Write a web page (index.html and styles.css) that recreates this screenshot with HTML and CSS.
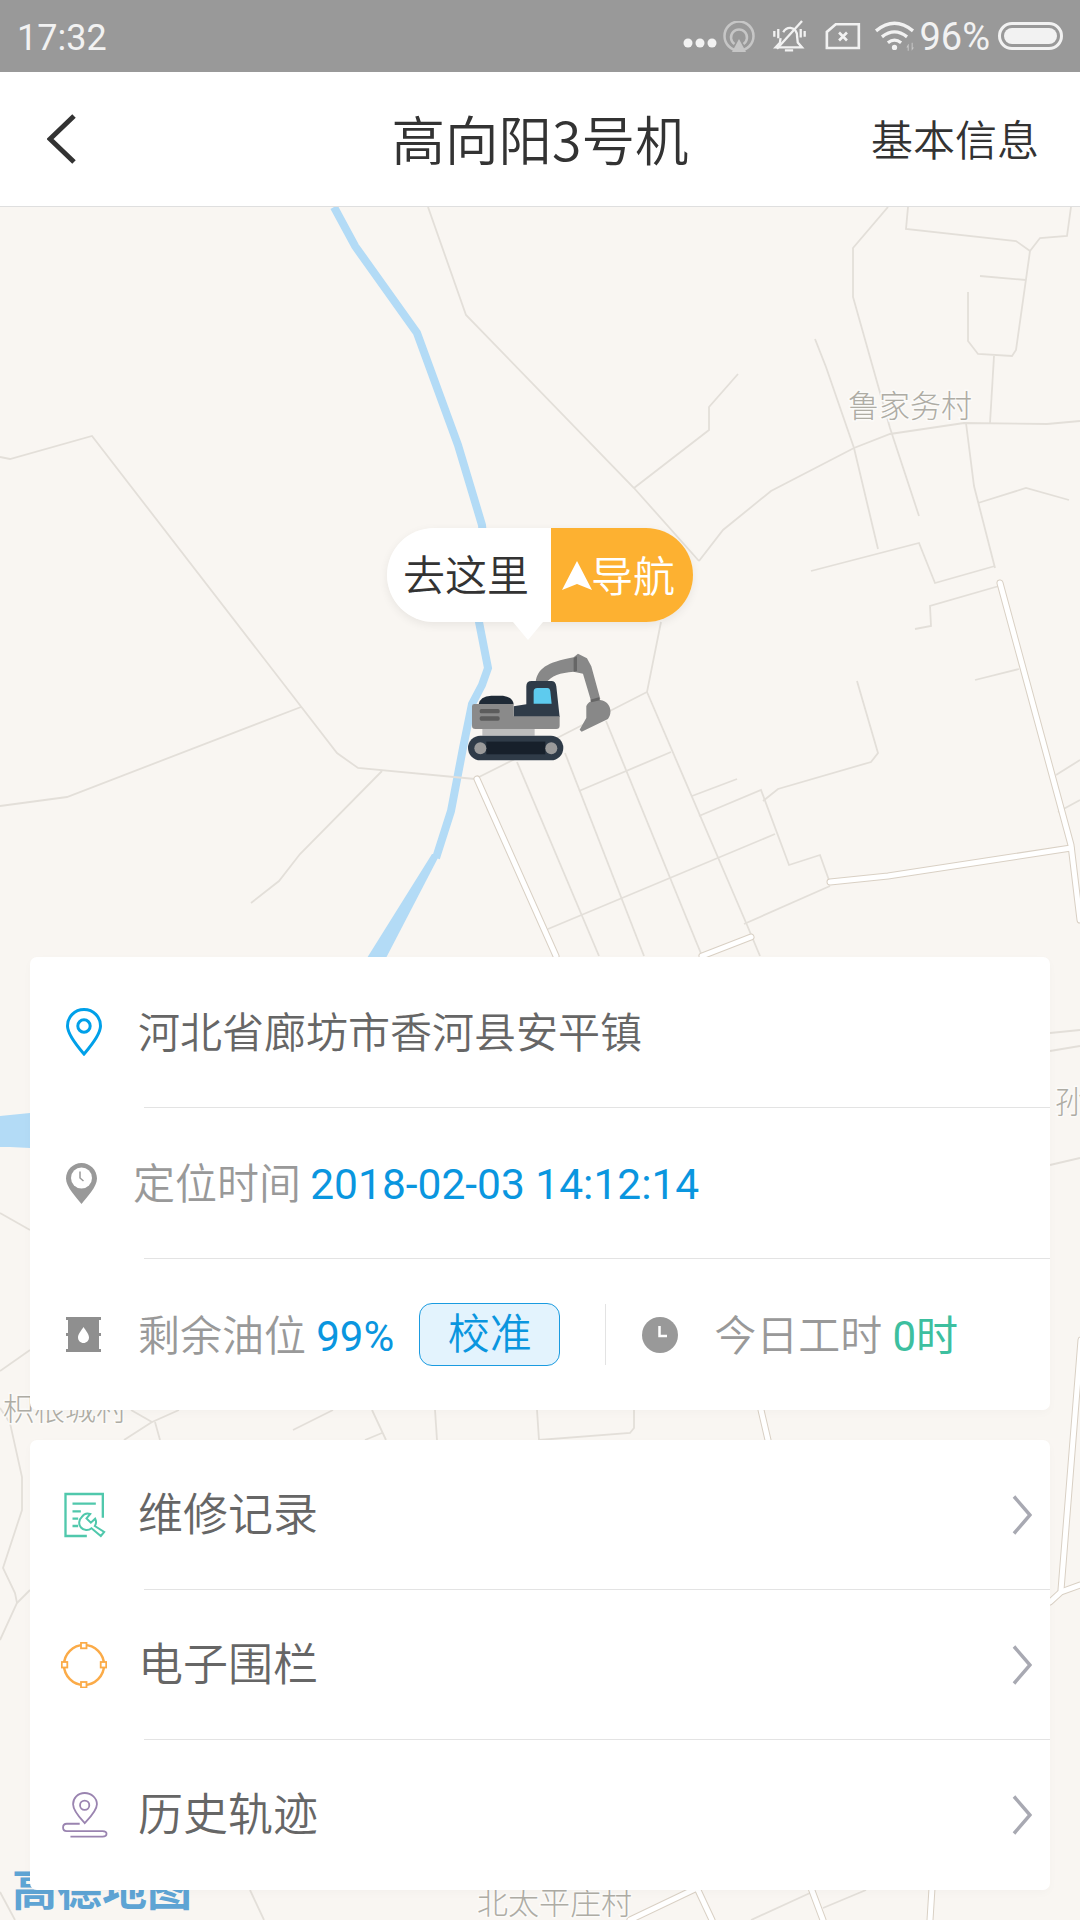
FILE: index.html
```html
<!DOCTYPE html>
<html lang="zh-CN">
<head>
<meta charset="utf-8">
<title>高向阳3号机</title>
<link rel="stylesheet" href="styles.css">
</head>
<body>
<div class="screen">
  <header class="statusbar">
    <span class="clock-text">17:32</span>
    <div class="status-icons">
      <svg class="s-dots" viewBox="0 0 36 10"><circle cx="5" cy="5" r="4.5"/><circle cx="17" cy="5" r="4.5"/><circle cx="29" cy="5" r="4.5"/></svg>
      <svg class="s-cast" viewBox="0 0 32 31"><circle class="ln" cx="16" cy="15" r="14.5"/><path class="ln" d="M11.5 23a8 8 0 1 1 9 0"/><path class="fl" d="M16 18l7 13H9z"/></svg>
      <svg class="s-bell" viewBox="305 15 115 100"><path class="ln" d="M345 52q8-14 22-13 20 3 20 26l2 18 13 15H322l13-14 2-14"/><path class="ln" d="M402 18L326 102"/><path class="ln" d="M350 107h25M318 48v18M330 42v28M398 42v26M410 48v18"/></svg>
      <svg class="s-sim" viewBox="465 20 108 85"><path class="ln" d="M497 27h70v72h-97V50z"/><path class="ln" d="M507 52l24 24M531 52l-24 24"/></svg>
      <svg class="s-wifi" viewBox="605 15 130 100"><path class="wf" d="M614 48Q670 2 726 48"/><path class="wf" d="M632 66Q670 36 708 66"/><path class="wf" d="M650 84Q670 68 690 84"/><circle class="fl" cx="670" cy="98" r="8"/><path class="dim" d="M712 88l-6 10h4v10h3V88zM722 84v24l7-10h-4V84z"/></svg>
      <span class="batt-text">96%</span>
      <span class="battery"><span class="battery-fill"></span></span>
    </div>
  </header>

  <nav class="navbar">
    <svg class="nav-back" viewBox="0 0 30 50"><path d="M27 2L3 25l24 23"/></svg>
    <h1 class="nav-title">高向阳3号机</h1>
    <span class="nav-action">基本信息</span>
  </nav>

  <main class="map">
    <svg class="map-canvas" viewBox="0 207 1080 1713">
      <path class="water-fill" d="M0 1116L30 1113V1148L10 1147L0 1147Z"/>
      <path class="water-fill" d="M432 854L367 958H386L440 854Z"/>
      <path class="water" d="M334 207L355 246L417 333L458 445L482 525L486 570L479 622L488 668L482 685L472 704L463 748L451 811L436 858"/>

      <g class="road">
        <path d="M428 207L466 315L634 488L699 561"/>
        <path d="M634 488L709 430V407L738 374"/>
        <path d="M699 561L723 530L771 491L854 448L890 434L964 423L1047 424L1080 421"/>
        <path d="M888 207L853 248V297L890 428L919 516"/>
        <path d="M815 339L826 367L854 448L878 549"/>
        <path d="M908 207L906 229L1016 241L1030 251L1016 350L1012 356L978 354L968 341V292"/>
        <path d="M1030 251L1040 238L1067 236L1071 207"/>
        <path d="M980 276L1026 280"/>
        <path d="M994 356L990 423"/>
        <path d="M966 423L974 486L995 568"/>
        <path d="M978 503L1026 488L1069 500"/>
        <path d="M811 571L919 543L935 583L995 566"/>
        <path d="M915 629L931 626L930 606L999 586"/>
        <path d="M975 680L1019 669"/>
        <path d="M857 681L878 753L871 762L778 789L763 801"/>
        <path d="M661 622L647 692L561 736L475 779"/>
        <path d="M647 692L747 925L760 956"/>
        <path d="M606 721L702 956"/>
        <path d="M565 753L644 956"/>
        <path d="M517 762L599 956"/>
        <path d="M579 791L671 752"/>
        <path d="M692 796L737 779"/>
        <path d="M699 816L761 790L789 865L820 855L830 883"/>
        <path d="M548 929L775 834"/>
        <path d="M744 924L830 886"/>
        <path d="M1080 760L1056 775M1080 800L1058 812"/>
        <path d="M0 457L10 459L92 436L337 753L358 768L475 779"/>
        <path d="M0 806L67 797L301 707"/>
        <path d="M382 771L300 854L279 881L251 903"/>
        <path d="M0 1213L30 1230"/>
        <path d="M0 1371L30 1350"/>
        <path d="M0 1408L10 1423L22 1477V1510L3 1568L15 1593L17 1603L0 1640"/>
        <path d="M17 1603L30 1590"/>
        <path d="M0 1892L15 1920"/>
        <path d="M250 1890L264 1920"/>
        <path d="M131 1410L152 1422L179 1410"/>
        <path d="M152 1422L124 1440M155 1422L160 1440"/>
        <path d="M293 1430L333 1410"/>
        <path d="M372 1410L386 1440M365 1440L382 1433"/>
        <path d="M435 1410L437 1440"/>
        <path d="M537 1410L539 1440L630 1433L634 1428V1410"/>
        <path d="M1050 1033L1080 1030M1050 1051L1080 1046M1050 1165L1080 1158"/>
        <path d="M866 1890L823 1908M810 1893L751 1920"/>
      </g>

      <g class="street">
        <path class="street-edge" d="M1000 583L1071 845L1080 920"/>
        <path class="street-edge" d="M830 882L888 876L1071 848"/>
        <path class="street-edge" d="M477 779L556 956"/>
        <path class="street-edge" d="M702 956L751 937"/>
        <path class="street-edge" d="M761 1410L768 1440"/>
        <path class="street-edge" d="M1081 1340L1061 1590"/>
        <path class="street-edge" d="M1050 1602L1061 1592L1080 1585"/>
        <path class="street-edge" d="M697 1888L630 1920"/>
        <path class="street-edge" d="M697 1888L712 1920"/>
        <path class="street-edge" d="M811 1888L823 1920"/>
        <path class="street-edge" d="M932 1888L930 1920"/>
        <path class="street-core" d="M1000 583L1071 845L1080 920"/>
        <path class="street-core" d="M830 882L888 876L1071 848"/>
        <path class="street-core" d="M477 779L556 956"/>
        <path class="street-core" d="M702 956L751 937"/>
        <path class="street-core" d="M761 1410L768 1440"/>
        <path class="street-core" d="M1081 1340L1061 1590"/>
        <path class="street-core" d="M1050 1602L1061 1592L1080 1585"/>
        <path class="street-core" d="M697 1888L630 1920"/>
        <path class="street-core" d="M697 1888L712 1920"/>
        <path class="street-core" d="M811 1888L823 1920"/>
        <path class="street-core" d="M932 1888L930 1920"/>
      </g>

      <text class="place" x="848" y="417">鲁家务村</text>
      <text class="place" x="1055" y="1113">孙家村</text>
      <text class="place" x="3" y="1420">枳根城村</text>
      <text class="place" x="477" y="1914">北太平庄村</text>
      <text class="amap-logo" x="12" y="1906">高德地图</text>
    </svg>

    <div class="bubble">
      <span class="bubble-go">去这里</span>
      <span class="bubble-nav"><svg class="nav-arrow" viewBox="0 0 30 29"><path d="M15 0l15 29-15-6-15 6z"/></svg><span class="bubble-label">导航</span></span>
    </div>

    <svg class="excavator" viewBox="295 430 430 325">
      <path class="ex-arm" d="M498 518C503 478 530 458 612 443L625 432L652 446L665 470L692 568L665 576L640 492L612 486C572 490 545 496 528 522Z"/>
      <path class="ex-dark" d="M612 445L622 440V484L612 486Z"/>
      <path class="ex-arm" d="M650 590C655 572 690 562 712 580C726 594 725 615 715 628L636 666L630 660L650 625Z"/>
      <path class="ex-dark" d="M662 570L688 563L691 572L665 578Z"/>
      <path class="ex-cab" d="M470 530Q470 514 486 514H545Q558 514 560 530L570 622H432V590L470 584Z"/>
      <path class="ex-glass" d="M492 546Q492 535 503 535H533Q541 535 542 545L546 582H492Z"/>
      <path class="ex-hood" d="M327 584Q330 560 365 558H400Q430 562 432 584Z"/>
      <path class="ex-body" d="M307 590Q307 583 314 583H432V620H570V648Q570 658 560 658H317Q307 658 307 648Z"/>
      <rect class="ex-vent" x="330" y="598" width="60" height="13" rx="5"/>
      <rect class="ex-vent" x="330" y="620" width="60" height="13" rx="5"/>
      <rect class="ex-under" x="338" y="658" width="157" height="20"/>
      <rect class="ex-cab" x="295" y="678" width="286" height="74" rx="37"/>
      <rect class="ex-track" x="350" y="696" width="177" height="38"/>
      <circle class="ex-wheel" cx="332" cy="716" r="18"/>
      <circle class="ex-wheel" cx="545" cy="716" r="18"/>
    </svg>

    <section class="card card-info">
      <div class="row">
        <span class="slot"><svg class="i-pin" viewBox="0 0 36 48"><path d="M18 1.5C8.5 1.5 1.5 9 1.5 18C1.5 27 12 39 18 46C24 39 34.5 27 34.5 18C34.5 9 27.5 1.5 18 1.5Z"/><circle cx="18" cy="18" r="6.2"/></svg></span>
        <span class="txt">河北省廊坊市香河县安平镇</span>
      </div>
      <div class="divider"></div>
      <div class="row">
        <span class="slot slot-narrow"><svg class="i-gpin" viewBox="0 0 31 41"><path class="g" d="M15.5 0C7 0 0 7 0 15.5C0 24 10 34 15.5 41C21 34 31 24 31 15.5C31 7 24 0 15.5 0Z"/><circle class="w" cx="15.5" cy="15" r="10.5"/><path class="h" d="M14 8.5V15L17.5 18"/></svg></span>
        <span class="txt muted">定位时间 <b class="blue date">2018-02-03 14:12:14</b></span>
      </div>
      <div class="divider"></div>
      <div class="row row-tall">
        <span class="slot"><svg class="i-barrel" viewBox="0 0 35 35"><path class="g" d="M0 0H35V3H33V16H35V19H33V32H35V35H0V32H2V19H0V16H2V3H0Z"/><path class="w" d="M17.5 10C15 14 12 17 12 20.5C12 23.5 14.5 26 17.5 26C20.5 26 23 23.5 23 20.5C23 17 20 14 17.5 10Z"/></svg></span>
        <span class="txt muted">剩余油位 <b class="blue">99%</b></span>
        <button class="calibrate" type="button">校准</button>
        <span class="vsep"></span>
        <svg class="i-clock" viewBox="0 0 36 36"><circle class="g" cx="18" cy="18" r="18"/><path class="h" d="M17.5 9V19H25"/></svg>
        <span class="txt muted work">今日工时 <b class="green">0时</b></span>
      </div>
    </section>

    <section class="card card-menu">
      <div class="row row-menu">
        <span class="slot slot-doc"><svg class="i-doc" viewBox="190 213 125 138"><path class="d" d="M306 290V219H194V345H258"/><path class="d" d="M215 248H285M215 271H240M215 293H232M215 315H232"/><path class="wr" d="M268 279L257 292L270 305L283 293A22 22 0 0 1 282 315L310 333L300 345L272 322A22 22 0 0 1 243 288A22 22 0 0 1 268 279Z"/></svg></span>
        <span class="txt txt-menu">维修记录</span>
        <svg class="chev" viewBox="0 0 20 40"><path d="M2 1.500L18 20L2 38.500"/></svg>
      </div>
      <div class="divider"></div>
      <div class="row row-menu">
        <span class="slot slot-fence"><svg class="i-fence" viewBox="0 0 46 46"><circle class="c" cx="23" cy="23" r="20"/><rect class="s" x="20" y="0.800" width="5.500" height="5.500"/><rect class="s" x="20" y="40" width="5.500" height="5.500"/><rect class="s" x="0.800" y="20" width="5.500" height="5.500"/><rect class="s" x="39.700" y="20" width="5.500" height="5.500"/></svg></span>
        <span class="txt txt-menu">电子围栏</span>
        <svg class="chev" viewBox="0 0 20 40"><path d="M2 1.500L18 20L2 38.500"/></svg>
      </div>
      <div class="divider"></div>
      <div class="row row-menu">
        <span class="slot slot-fence"><svg class="i-track" viewBox="180 1110 144 145"><path d="M251 1116C230 1116 216 1132 216 1150C216 1170 240 1195 251 1207C262 1195 288 1170 288 1150C288 1132 272 1116 251 1116Z"/><circle cx="251" cy="1153" r="14"/><path d="M236 1209H197C182 1209 182 1231 197 1231H305C321 1231 321 1248 305 1248H208"/></svg></span>
        <span class="txt txt-menu">历史轨迹</span>
        <svg class="chev" viewBox="0 0 20 40"><path d="M2 1.500L18 20L2 38.500"/></svg>
      </div>
    </section>
  </main>
</div>
</body>
</html>
```

FILE: styles.css
```css
* { box-sizing: border-box; }
html, body { margin: 0; padding: 0; background: #f9f6f2; }
body { font-family: Roboto, "Noto Sans CJK SC", sans-serif; font-weight: 350; }

.screen { width: 1080px; height: 1920px; display: flex; flex-direction: column; overflow: hidden; }

/* status bar */
.statusbar { height: 72px; background: #999; color: #f2f2f2; display: flex; align-items: center; justify-content: space-between; padding: 0 17px; flex: none; }
.clock-text { font-size: 36px; line-height: 72px; padding-top: 3px; font-weight: 400; }
.status-icons { display: flex; align-items: center; }
.status-icons svg { display: block; fill: none; }
.status-icons .ln { fill: none; stroke: #f2f2f2; stroke-width: 7; }
.status-icons .fl { fill: #f2f2f2; stroke: none; }
.status-icons .dim { fill: #c8c8c8; }
.status-icons .wf { fill: none; stroke: #f2f2f2; stroke-width: 10; }
.s-dots { width: 36px; height: 10px; fill: #f2f2f2 !important; margin-top: 13px; }
.s-cast { width: 32px; height: 31px; margin-left: 4px; }
.s-cast .ln { stroke: #c6c6c6 !important; stroke-width: 2.500 !important; }
.s-cast .fl { fill: #c6c6c6 !important; }
.s-bell { width: 38px; height: 33px; margin-left: 15px; }
.s-sim { width: 36px; height: 28px; margin-left: 17px; }
.s-sim .ln { stroke-width: 8 !important; }
.s-wifi { width: 43px; height: 33px; margin-left: 12px; }
.batt-text { font-size: 38px; line-height: 72px; margin-left: 3px; padding-top: 2px; font-weight: 400; }
.battery { width: 65px; height: 28px; margin-left: 8px; border: 3px solid #f2f2f2; border-radius: 14px; padding: 3px; display: block; }
.battery-fill { display: block; height: 100%; background: #f2f2f2; border-radius: 9px; }

/* navigation */
.navbar { height: 135px; flex: none; background: #fff; border-bottom: 1px solid #dfdfdf; display: flex; align-items: center; position: relative; padding: 0 41px 0 47px; justify-content: space-between; }
.nav-back { width: 30px; height: 50px; fill: none; stroke: #333; stroke-width: 5; }
.nav-title { position: absolute; left: 0; right: 0; top: -2px; margin: 0; text-align: center; font-family: "Noto Sans CJK SC", sans-serif; font-size: 53.500px; font-weight: 350; color: #333; line-height: 135px; }
.nav-action { font-size: 42px; color: #333; position: relative; top: -2px; }

/* map canvas */
.map { flex: 1; position: relative; background: #f9f6f2; display: flex; flex-direction: column; justify-content: flex-end; gap: 30px; padding: 0 30px 30px; }
.map-canvas { position: absolute; left: 0; top: 0; width: 1080px; height: 1713px; fill: none; }
.water { stroke: #b3dbf6; stroke-width: 8; fill: none; }
.water-fill { fill: #b3dbf6; }
.road path { stroke: #e3dfd9; stroke-width: 1.800; fill: none; }
.street-edge { stroke: #d9d0c4; stroke-width: 7; fill: none; stroke-linecap: round; }
.street-core { stroke: #fff; stroke-width: 5; fill: none; stroke-linecap: round; }
.place { font-size: 31px; fill: #aeaca4; stroke: #fbfaf8; stroke-width: 3; paint-order: stroke; font-family: "Noto Sans CJK SC", sans-serif; font-weight: 300; }
.amap-logo { font-size: 45px; fill: #5ea4d4; font-weight: 700; font-family: "Noto Sans CJK SC", sans-serif; }

/* marker bubble */
.bubble { position: absolute; left: 387px; top: 321px; width: 306px; height: 94px; display: flex; border-radius: 47px; box-shadow: 0 3px 10px rgba(0,0,0,.07); }
.bubble::after { content: ""; position: absolute; left: 126px; top: 94px; border-left: 15px solid transparent; border-right: 15px solid transparent; border-top: 18px solid #fff; }
.bubble-go { width: 164px; background: #fff; border-radius: 47px 0 0 47px; font-size: 42px; color: #333; line-height: 98px; padding-left: 16px; }
.bubble-nav { flex: 1; background: #fdb131; border-radius: 0 47px 47px 0; color: #fff; font-size: 42px; display: flex; align-items: center; padding-left: 11px; }
.bubble-label { line-height: 60px; margin: 6px 0 0 -1px; }
.nav-arrow { width: 30px; height: 29px; fill: #fff; flex: none; }
.excavator { position: absolute; left: 468px; top: 446px; width: 143.300px; height: 108.300px; }
.ex-arm { fill: #888; }
.ex-dark { fill: #666; }
.ex-cab { fill: #2f3b48; }
.ex-glass { fill: #5ecbee; }
.ex-hood { fill: #1f2a36; }
.ex-body { fill: #8a8a8a; }
.ex-vent { fill: #5c5c5c; }
.ex-under { fill: #bdbdbd; }
.ex-track { fill: #17202b; }
.ex-wheel { fill: #9a9a9a; }

/* cards */
.card { position: relative; background: #fff; border-radius: 7px; box-shadow: 0 3px 10px rgba(0,0,0,.025); flex: none; }
.row { height: 150px; display: flex; align-items: center; padding-left: 36px; }
.row-tall { height: 151px; }
.row-menu { height: 149px; }
.row-menu:last-child { height: 150px; }
.divider { height: 1px; margin-left: 114px; background: #e3e3e3; }
.slot { width: 72px; flex: none; display: flex; align-items: center; }
.slot-narrow { width: 67px; }
.slot-doc { margin-left: -2px; width: 74px; }
.slot-fence { margin-left: -5px; width: 77px; }
.slot svg { display: block; }
.txt { font-size: 42px; color: #666; white-space: nowrap; line-height: 60px; padding-top: 4px; }
.txt-menu { font-size: 45px; padding-top: 2px; }
.txt.muted { color: #999; }
.txt b { font-weight: 400; }
.blue { color: #0a96df; }
.date { font-size: 42.500px; margin-left: -1px; }
.green { color: #3dbf9f; }

.i-pin { width: 36px; height: 48px; fill: none; stroke: #00a0e9; stroke-width: 3; }
.i-gpin { width: 31px; height: 41px; }
.i-gpin .g, .i-barrel .g, .i-clock .g { fill: #999; }
.i-barrel .g { fill: #8f8f8f; }
.i-gpin .w, .i-barrel .w { fill: #fff; }
.i-gpin .h { fill: none; stroke: #999; stroke-width: 1.500; }
.i-barrel { width: 35px; height: 35px; }
.calibrate { width: 141px; height: 63px; margin: 0 0 0 25px; padding: 0; background: #e3f3fd; border: 1.500px solid #1a9be0; border-radius: 13px; color: #0a96df; font: inherit; font-size: 42px; line-height: 58px; }
.vsep { width: 1px; height: 61px; background: #e3e3e3; margin-left: 45px; flex: none; }
.i-clock { width: 36px; height: 36px; margin-left: 36px; flex: none; }
.i-clock .h { fill: none; stroke: #fff; stroke-width: 2.500; }
.work { margin-left: 36px; }

.i-doc { width: 42px; height: 46px; }
.i-doc .d { fill: none; stroke: #50c8ac; stroke-width: 7; }
.i-doc .wr { fill: #fff; stroke: #50c8ac; stroke-width: 6; }
.i-fence { width: 46px; height: 46px; }
.i-fence .c { fill: none; stroke: #fbab48; stroke-width: 2.500; }
.i-fence .s { fill: #fff; stroke: #fbab48; stroke-width: 1.800; }
.i-track { width: 48px; height: 48px; fill: none; stroke: #9a84b0; stroke-width: 5.500; }
.chev { width: 20px; height: 40px; margin-left: auto; margin-right: 18px; fill: none; stroke: #a8a9b2; stroke-width: 3.500; flex: none; }
```
